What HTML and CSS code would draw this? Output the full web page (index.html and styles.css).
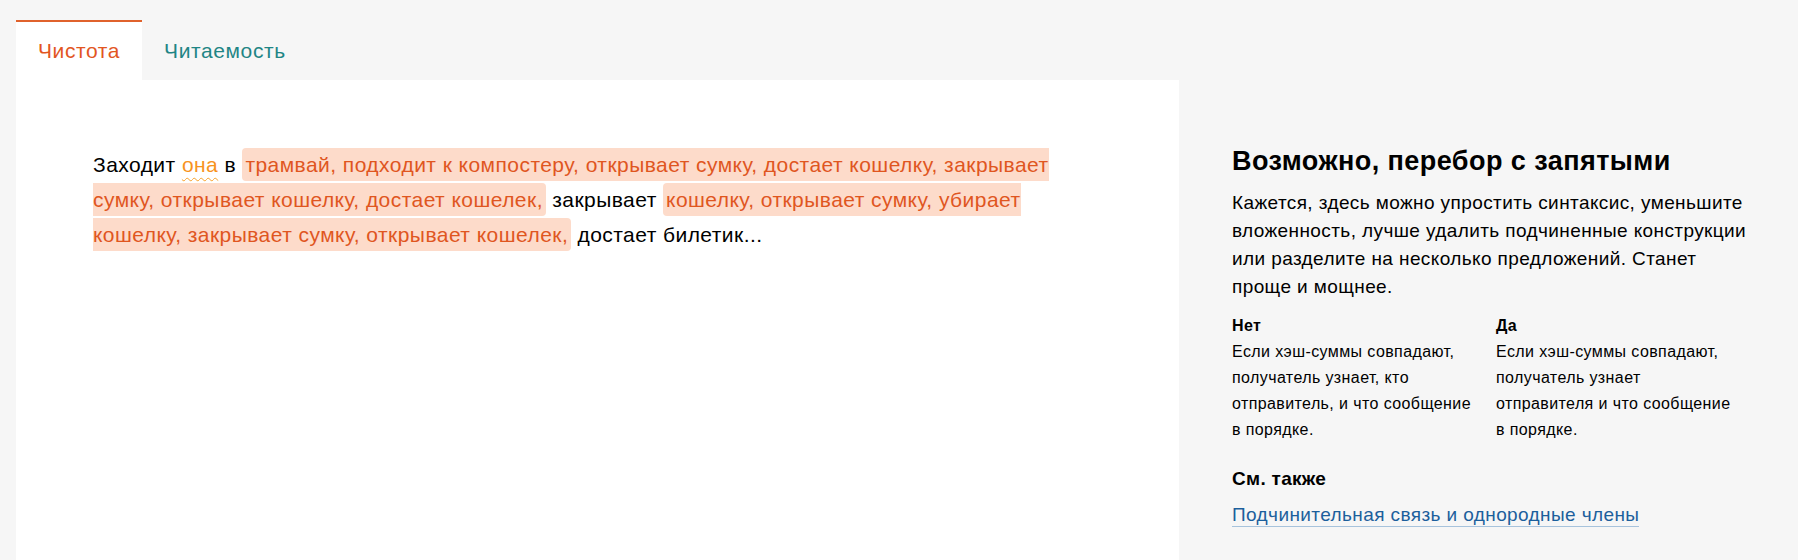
FILE: index.html
```html
<!DOCTYPE html>
<html lang="ru">
<head>
<meta charset="utf-8">
<title>Чистота</title>
<link rel="stylesheet" href="styles.css">
</head>
<body>
<div class="tabs">
  <div class="tab tab-active">Чистота</div>
  <div class="tab">Читаемость</div>
</div>
<div class="main">
  <div class="editor">
    <p class="text">Заходит <span class="warn">она</span> в <span class="hl">трамвай, подходит к компостеру, открывает сумку, достает кошелку, закрывает сумку, открывает кошелку, достает кошелек,</span> закрывает <span class="hl">кошелку, открывает сумку, убирает кошелку, закрывает сумку, открывает кошелек,</span> достает билетик...</p>
  </div>
  <div class="aside">
    <h2 class="aside-title">Возможно, перебор с запятыми</h2>
    <p class="aside-text">Кажется, здесь можно упростить синтаксис, уменьшите вложенность, лучше удалить подчиненные конструкции или разделите на несколько предложений. Станет проще и мощнее.</p>
    <div class="examples">
      <div class="example">
        <div class="example-label">Нет</div>
        <div class="example-text">Если хэш-суммы совпадают, получатель узнает, кто отправитель, и что сообщение в порядке.</div>
      </div>
      <div class="example">
        <div class="example-label">Да</div>
        <div class="example-text">Если хэш-суммы совпадают, получатель узнает отправителя и что сообщение в порядке.</div>
      </div>
    </div>
    <h3 class="see-title">См. также</h3>
    <a class="see-link" href="#">Подчинительная связь и однородные члены</a>
  </div>
</div>
</body>
</html>
```
FILE: styles.css
```css
html, body {
  margin: 0;
  padding: 0;
}
body {
  background: #f6f6f6;
  font-family: "Liberation Sans", Arial, sans-serif;
  color: #000;
  height: 560px;
  overflow: hidden;
}
.tabs {
  display: flex;
  padding: 20px 0 0 16px;
  height: 60px;
}
.tab {
  height: 58px;
  border-top: 2px solid transparent;
  padding: 0 22px;
  display: flex;
  align-items: center;
  font-size: 21px;
  letter-spacing: 0.6px;
  color: #1f8585;
}
.tab-active {
  background: #fff;
  border-top-color: #e0622c;
  color: #e2561f;
}
.main {
  display: flex;
  height: 480px;
}
.editor {
  margin-left: 16px;
  width: 1163px;
  box-sizing: border-box;
  background: #fff;
  padding: 67px 106px 0 77px;
}
.text {
  margin: 0;
  font-size: 21px;
  letter-spacing: 0.45px;
  line-height: 35px;
}
.warn {
  color: #f7931e;
  text-decoration: underline wavy #f7a12a;
  text-decoration-thickness: 1px;
  text-underline-offset: 5px;
}
.hl {
  background: #fddbca;
  color: #e0561f;
  padding: 5px 3px;
  border-radius: 4px;
}
.aside {
  flex: 1;
  padding: 65px 30px 0 53px;
}
.aside-title {
  margin: 0;
  font-size: 27px;
  letter-spacing: 0.45px;
  line-height: 32px;
  font-weight: bold;
}
.aside-text {
  margin: 12px 0 0;
  width: 518px;
  font-size: 19px;
  letter-spacing: 0.4px;
  line-height: 28px;
}
.examples {
  margin-top: 12px;
  display: grid;
  grid-template-columns: 246px 246px;
  column-gap: 18px;
  font-size: 16px;
  letter-spacing: 0.4px;
  line-height: 26px;
}
.example-label {
  font-weight: bold;
}
.see-title {
  margin: 22px 0 0;
  font-size: 19px;
  letter-spacing: 0.3px;
  line-height: 28px;
  font-weight: bold;
}
.see-link {
  display: inline-block;
  margin-top: 11px;
  font-size: 19px;
  letter-spacing: 0.4px;
  line-height: 22px;
  color: #1c5f9c;
  text-decoration: none;
  border-bottom: 1px solid #a7c3dc;
}
```
